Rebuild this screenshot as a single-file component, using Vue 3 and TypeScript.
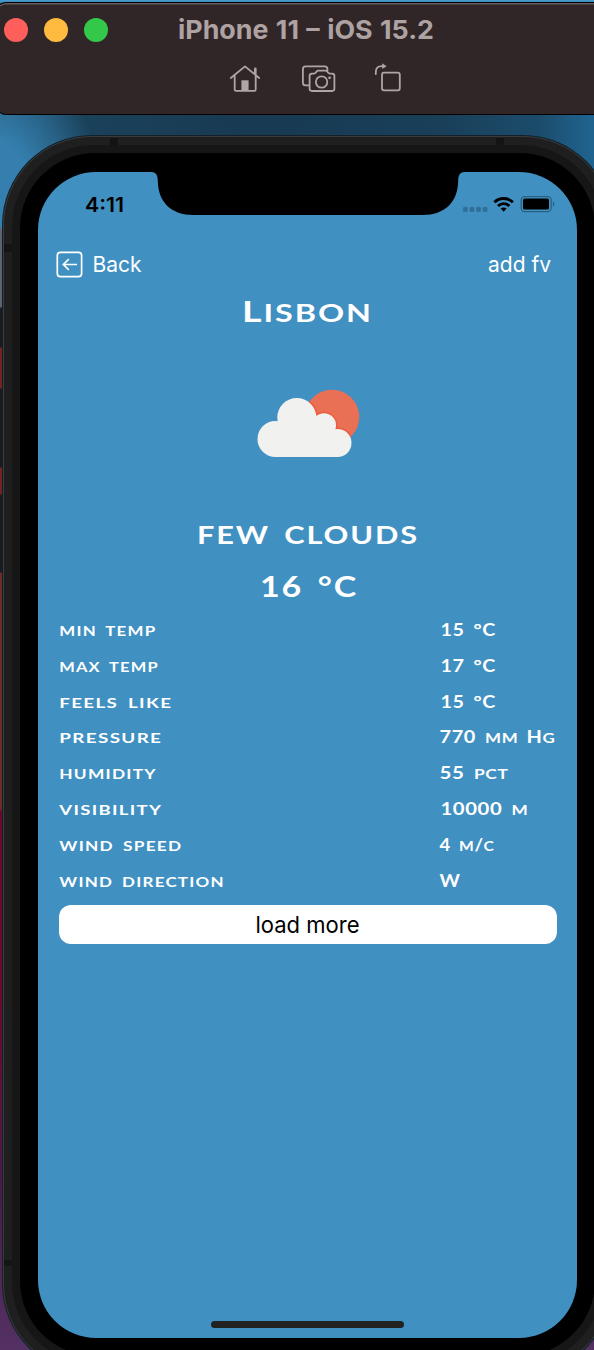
<script setup lang="ts">
interface Run {
  text: string
  small?: boolean
}
interface Row {
  label: string
  labelWidth: number
  value: Run[]
  valueWidth: number
  inset: number
}

const rows: Row[] = [
  { label: 'MIN TEMP', labelWidth: 97, value: [{ text: '15 °C' }], valueWidth: 55.5, inset: 1.5 },
  { label: 'MAX TEMP', labelWidth: 99.5, value: [{ text: '17 °C' }], valueWidth: 55.5, inset: 1.5 },
  { label: 'FEELS LIKE', labelWidth: 113, value: [{ text: '15 °C' }], valueWidth: 55.5, inset: 1.5 },
  {
    label: 'PRESSURE',
    labelWidth: 103,
    value: [{ text: '770 ' }, { text: 'MM ', small: true }, { text: 'H' }, { text: 'G', small: true }],
    valueWidth: 116,
    inset: 0.5,
  },
  { label: 'HUMIDITY', labelWidth: 97.5, value: [{ text: '55 ' }, { text: 'PCT', small: true }], valueWidth: 69, inset: 0.5 },
  { label: 'VISIBILITY', labelWidth: 103, value: [{ text: '10000 ' }, { text: 'M', small: true }], valueWidth: 88, inset: 1.5 },
  {
    label: 'WIND SPEED',
    labelWidth: 123,
    value: [{ text: '4 ' }, { text: 'M', small: true }, { text: '/' }, { text: 'C', small: true }],
    valueWidth: 55,
    inset: 0.5,
  },
  { label: 'WIND DIRECTION', labelWidth: 165.5, value: [{ text: 'W' }], valueWidth: 21, inset: 0.5 },
]
</script>

<template>
  <div class="desktop">
    <header class="window">
      <div class="titlebar">
        <i class="light red"></i><i class="light amber"></i><i class="light green"></i>
        <svg class="title" width="260" height="36">
          <text x="0" y="26.5" textLength="256" lengthAdjust="spacingAndGlyphs">iPhone 11 – iOS 15.2</text>
        </svg>
      </div>
      <div class="tools">
        <svg width="32" height="30" viewBox="229 63 32 30">
          <path d="M230.8 78 245 66.4 259.2 78M234.7 76v13.4q0 1.5 1.5 1.5h18q1.500 0 1.500-1.500V76" />
          <path d="M255.300 68.800v5" stroke-width="2.600" />
          <path class="solid" d="M241.400 80.300h7.200V91h-7.200z" />
        </svg>
        <svg width="36" height="30" viewBox="301 63 36 30">
          <path d="M308.500 85.300h-3q-2.600 0-2.600-2.600V69q0-2.600 2.600-2.600h19.300q2.600 0 2.600 2.600v1.500" />
          <path
            d="M312 73.600h2q1 0 1.600-.8l1-1.300q.7-.9 1.800-.9h7q1.100 0 1.800.9l1 1.300q.6.8 1.600.8h2.200q2.400 0 2.400 2.400v12.600q0 2.400-2.400 2.400h-20q-2.400 0-2.400-2.400V76q0-2.400 2.400-2.400z"
          />
          <circle cx="321.600" cy="82" r="5.700" />
          <circle class="solid" cx="329.600" cy="77.800" r="1.400" />
        </svg>
        <svg width="30" height="30" viewBox="373 63 30 30">
          <rect x="382" y="72.700" width="17.800" height="17.600" rx="2" />
          <path d="M375.800 74v-1.800q0-6 6-6h1.500" />
          <path class="solid" d="M382.200 63.200v5.900l4.400-2.900z" />
        </svg>
      </div>
    </header>

    <div class="phone">
      <i class="seam top-left"></i><i class="seam top-right"></i>
      <i class="seam side-top"></i><i class="seam side-bottom"></i>
      <div class="rim">
        <div class="bezel">
          <main class="screen">
            <svg class="notch" width="320" height="44" viewBox="147.5 172 320 44">
              <path
                d="M147.500 171.900h2C155.500 172 157.200 174.500 157.300 181 157.700 202 170.500 215 193 215h229c22.500 0 35.300-13 35.700-34 .1-6.500 1.800-9 7.800-9.100h2z"
              />
            </svg>

            <div class="status">
              <svg width="42" height="24">
                <text class="clock" x="0" y="19.500" textLength="39" lengthAdjust="spacingAndGlyphs">4:11</text>
              </svg>
              <svg width="94" height="20" viewBox="462 194 94 20">
                <g fill="#316f99">
                  <rect x="463" y="207" width="4.700" height="5" rx="1.300" />
                  <rect x="469.600" y="207" width="4.700" height="5" rx="1.300" />
                  <rect x="476.200" y="207" width="4.700" height="5" rx="1.300" />
                  <rect x="482.700" y="207" width="4.700" height="5" rx="1.300" />
                </g>
                <g fill="none" stroke="#000" stroke-width="2.900">
                  <path d="M494.400 202.300a13.200 13.200 0 0 1 18.500 0" />
                  <path d="M498 206a8 8 0 0 1 11.300 0" />
                </g>
                <path d="M500.600 208.600q3-2.400 6 0l-3 3.200z" />
                <rect x="521.200" y="196.600" width="30" height="15" rx="3.600" fill="none" stroke="#275f86" stroke-width="1.200" />
                <rect x="523" y="198.600" width="26" height="11" rx="1.700" />
                <path d="M552.900 201.500q3 2.600 0 5.200z" fill="#275f86" />
              </svg>
            </div>

            <nav class="nav">
              <span class="back">
                <svg width="28" height="28" viewBox="56 249 28 28" fill="none" stroke="#fff" stroke-width="1.700">
                  <rect x="57.300" y="251.300" width="24.300" height="24.300" rx="3.200" />
                  <path d="M77 263.500H63.600M68.800 258.200l-5.400 5.300 5.400 5.300" />
                </svg>
                <svg width="52" height="30">
                  <text x="0.500" y="22.500" textLength="49" lengthAdjust="spacingAndGlyphs">Back</text>
                </svg>
              </span>
              <svg width="64" height="30">
                <text x="1" y="22.500" textLength="63" lengthAdjust="spacingAndGlyphs">add fv</text>
              </svg>
            </nav>

            <section class="summary">
              <svg class="plate city" width="132" height="30">
                <text x="0" y="24.500" textLength="131" lengthAdjust="spacingAndGlyphs">L<tspan class="sc">ISBON</tspan></text>
              </svg>
              <svg class="weather" width="104" height="70" viewBox="256 389 104 70">
                <clipPath id="sun"><circle cx="332" cy="417" r="27.300" /></clipPath>
                <circle cx="332" cy="417" r="27.300" fill="#e97054" />
                <g fill="none" stroke="#ef5a3c" stroke-width="1.500" clip-path="url(#sun)">
                  <circle cx="296.800" cy="417.500" r="20.300" />
                  <circle cx="324" cy="425.300" r="12.800" />
                  <circle cx="337.500" cy="443" r="14.800" />
                </g>
                <g fill="#f1f1f0">
                  <circle cx="275.500" cy="439" r="18" />
                  <circle cx="296.800" cy="417.500" r="19.500" />
                  <circle cx="324" cy="425.300" r="12" />
                  <circle cx="337.500" cy="443" r="14" />
                  <path d="M275.500 457V430l32-14 8 1.500 12 6 8 7 2 26.500z" />
                </g>
              </svg>
              <svg class="plate sky" width="224" height="30">
                <text x="0" y="24" textLength="222" lengthAdjust="spacingAndGlyphs">FEW CLOUDS</text>
              </svg>
              <svg class="plate temp" width="98" height="34">
                <text x="0" y="28" textLength="98" lengthAdjust="spacingAndGlyphs">16 °C</text>
              </svg>
            </section>

            <section class="rows">
              <div v-for="row in rows" :key="row.label" class="row">
                <svg class="plate" width="200" height="22">
                  <text class="label" x="0.300" y="17" :textLength="row.labelWidth" lengthAdjust="spacingAndGlyphs">{{ row.label }}</text>
                </svg>
                <svg class="plate" width="122" height="22">
                  <text class="value" :x="row.inset" y="17" :textLength="row.valueWidth" lengthAdjust="spacingAndGlyphs"><tspan v-for="(run, i) in row.value" :key="i" :class="{ sc: run.small }">{{ run.text }}</tspan></text>
                </svg>
              </div>
            </section>

            <button class="more">
              <svg width="106" height="30">
                <text x="0.500" y="23" textLength="104" lengthAdjust="spacingAndGlyphs">load more</text>
              </svg>
            </button>
            <i class="home-bar"></i>
          </main>
        </div>
      </div>
    </div>
  </div>
</template>

<style>
body {
  margin: 0;
  overflow: hidden;
}
</style>

<style scoped>
.desktop {
  box-sizing: border-box;
  width: 594px;
  height: 1350px;
  padding-top: 2px;
  overflow: hidden;
  font-family: Inter, 'Liberation Sans', sans-serif;
  background:
    linear-gradient(#4a9fd0, #3580b0) 0 0 / 594px 3px no-repeat,
    radial-gradient(ellipse 110px 130px at -10px 185px, #347fae 35%, #347fae00 100%) 0 0 / 594px 228px no-repeat,
    linear-gradient(90deg, #22526e 0, #1b425b 80px, #183a52 250px, #193f59 440px, #1c4c6b 540px, #20638f 590px) 0 0 / 594px 228px no-repeat,
    linear-gradient(
      #347fae 228px, #5b6270 229px 307px, #1b1b1b 308px 347px, #722322 348px 388px, #1b1b1b 389px 467px,
      #722322 468px 494px, #1b1b1b 495px 572px, #6b2d25 573px 809px, #6b0a2a 811px 1000px, #4a1a48 1180px, #533163 1350px
    );
}
svg {
  display: block;
  flex: none;
  overflow: visible;
}
.window {
  box-sizing: border-box;
  width: 620px;
  height: 113px;
  margin-left: -5px;
  border: 1px solid #000;
  border-radius: 11px;
  background: #302627;
  box-shadow: inset 0 1.5px 0 #655d5c;
}
.titlebar {
  display: flex;
  align-items: center;
  height: 54px;
  padding-left: 8px;
}
.light {
  width: 24px;
  height: 24px;
  margin-right: 16px;
  border-radius: 50%;
}
.red { background: #fe5f5b; }
.amber { background: #febb40; }
.green { background: #34c84a; }
.title {
  margin-left: 54px;
}
.title text {
  font-size: 26px;
  font-weight: 700;
  word-spacing: 1px;
  fill: #aea2a3;
}
.tools {
  display: flex;
  gap: 40px;
  margin-top: 6px;
  padding-left: 233px;
  fill: none;
  stroke: #b0a5a6;
  stroke-width: 1.8;
  stroke-linecap: round;
  stroke-linejoin: round;
}
.tools svg:last-child {
  margin-left: -4px;
}
.tools .solid {
  fill: #b0a5a6;
  stroke: none;
}
.phone {
  position: relative;
  box-sizing: border-box;
  width: 609px;
  height: 1237px;
  margin: 21px 0 0 3px;
  padding: 8px 8px 9px;
  border: 1px solid #3a3b3b;
  border-radius: 89px;
  background: #1f1f1f;
  box-shadow: 0 0 0 1px #11202a;
}
.seam {
  position: absolute;
  width: 8px;
  height: 8px;
  background: #141414;
}
.top-left { left: 106px; top: 1px; }
.top-right { left: 492px; top: 1px; }
.side-top { left: 0; top: 107px; }
.side-bottom { left: 0; top: 1123px; height: 6px; }
.rim {
  position: relative;
  box-sizing: border-box;
  height: 1219px;
  padding: 8px;
  border-radius: 82px;
  background: #161616;
}
.bezel {
  box-sizing: border-box;
  height: 1203px;
  padding: 19px 18px;
  border-radius: 75px;
  background: #000;
}
.screen {
  position: relative;
  box-sizing: border-box;
  display: flex;
  flex-direction: column;
  width: 539px;
  height: 1166px;
  border-radius: 58px;
  background: #4090c2;
  overflow: hidden;
}
.notch {
  position: absolute;
  left: 109.5px;
  top: 0;
}
.status {
  display: flex;
  justify-content: space-between;
  align-items: center;
  height: 24px;
  margin: 20px 21px 0 47px;
}
.clock {
  font-size: 20px;
  font-weight: 600;
}
.nav {
  display: flex;
  justify-content: space-between;
  align-items: center;
  height: 30px;
  margin: 33px 26px 0 18px;
  fill: #fff;
  font-size: 22px;
}
.back {
  display: flex;
  align-items: center;
  gap: 8px;
}
.summary {
  display: flex;
  flex-direction: column;
  align-items: center;
}
.plate {
  font-family: Lato, 'Open Sans', sans-serif;
  font-weight: 700;
  fill: #fff;
}
.plate text {
  white-space: pre;
}
.city {
  margin-top: 18px;
  font-size: 29px;
  letter-spacing: 1.5px;
}
.city .sc {
  font-size: 25px;
}
.weather {
  margin-top: 62px;
}
.sky {
  margin-top: 61px;
  margin-left: 2px;
  font-size: 24.5px;
  letter-spacing: 1.5px;
  word-spacing: 4px;
}
.temp {
  margin: 19px 0 0 3px;
  font-size: 28.5px;
  letter-spacing: 1.5px;
  word-spacing: 4px;
}
.rows {
  margin: 16px 0 0 21px;
}
.row {
  display: grid;
  grid-template-columns: 380px 122px;
  height: 35.8px;
}
.label {
  font-size: 14px;
  letter-spacing: 1px;
  word-spacing: 3px;
}
.value {
  font-size: 16.5px;
  letter-spacing: 0.5px;
  word-spacing: 3px;
}
.value .sc {
  font-size: 14px;
}
.more {
  display: flex;
  justify-content: center;
  align-items: center;
  flex: none;
  width: 498px;
  height: 39px;
  margin: 0 0 0 20.5px;
  padding: 0;
  border: 0;
  border-radius: 12px;
  background: #fff;
  font-family: inherit;
  font-size: 23px;
}
.home-bar {
  width: 193px;
  height: 6.5px;
  margin: auto auto 10.5px 173px;
  border-radius: 4px;
  background: #222;
}
</style>
